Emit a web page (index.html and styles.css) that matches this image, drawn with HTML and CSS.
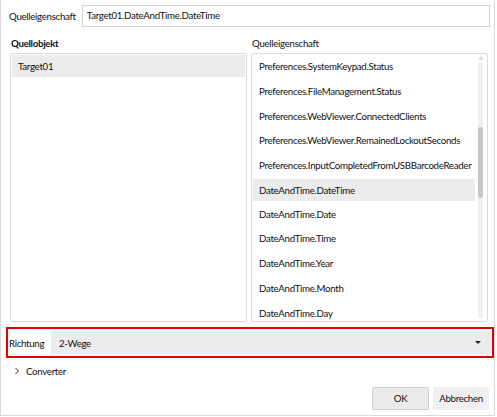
FILE: index.html
```html
<!DOCTYPE html>
<html>
<head>
<meta charset="utf-8">
<link rel="stylesheet" href="styles.css">
</head>
<body>
<div class="frame">
  <div class="toprow">
    <span class="label">Quelleigenschaft</span>
    <div class="input">Target01.DateAndTime.DateTime</div>
  </div>
  <div class="cols">
    <div class="col left">
      <div class="colhead">Quellobjekt</div>
      <div class="box">
        <div class="items">
          <div class="item sel">Target01</div>
        </div>
      </div>
    </div>
    <div class="col right">
      <div class="colhead light">Quelleigenschaft</div>
      <div class="box">
        <div class="items">
          <div class="item">Preferences.SystemKeypad.Status</div>
          <div class="item">Preferences.FileManagement.Status</div>
          <div class="item">Preferences.WebViewer.ConnectedClients</div>
          <div class="item">Preferences.WebViewer.RemainedLockoutSeconds</div>
          <div class="item">Preferences.InputCompletedFromUSBBarcodeReader</div>
          <div class="item sel">DateAndTime.DateTime</div>
          <div class="item">DateAndTime.Date</div>
          <div class="item">DateAndTime.Time</div>
          <div class="item">DateAndTime.Year</div>
          <div class="item">DateAndTime.Month</div>
          <div class="item">DateAndTime.Day</div>
        </div>
        <div class="scrollbar">
          <div class="arrow"></div>
          <div class="track"><div class="thumb"></div></div>
        </div>
      </div>
    </div>
  </div>
  <div class="dirrow">
    <span class="label">Richtung</span>
    <div class="combo">
      <span>2-Wege</span>
      <span class="caret"></span>
    </div>
  </div>
  <div class="conv">
    <svg class="chev" width="6" height="8" viewBox="0 0 6 8"><path d="M1.5 1 L4.5 4 L1.5 7" fill="none" stroke="#333" stroke-width="1"/></svg>
    <span>Converter</span>
  </div>
  <div class="buttons">
    <div class="btn ok">OK</div>
    <div class="btn cancel">Abbrechen</div>
  </div>
</div>
</body>
</html>
```

FILE: styles.css
```css
html, body {
  margin: 0;
  padding: 0;
  background: #ffffff;
}
body {
  font-family: "Lato", "Noto Sans", sans-serif;
  font-size: 9.7px;
  letter-spacing: -0.3px;
  color: #111111;
}
.frame {
  border: 1px solid #d9d9d9;
  border-top: none;
  box-sizing: border-box;
  width: 495px;
  height: 416px;
}
.toprow {
  display: flex;
  align-items: center;
  padding: 5px 4px 0 8px;
  height: 22px;
}
.toprow .label {
  width: 73px;
  white-space: nowrap;
}
.input {
  width: 409px;
  height: 22px;
  box-sizing: border-box;
  border: 1px solid #d2d2d2;
  padding: 0 4px;
  line-height: 18px;
}
.cols {
  display: flex;
  padding: 0 0 0 9px;
  gap: 4px;
  margin-top: 7px;
}
.col {
  width: 237px;
  display: flex;
  flex-direction: column;
}
.colhead {
  height: 19px;
  line-height: 18px;
  font-weight: 700;
  padding-left: 1px;
}
.colhead.light {
  font-weight: 400;
}
.box {
  height: 269px;
  box-sizing: border-box;
  border: 1px solid #dcdcdc;
  border-radius: 2px;
  display: flex;
  overflow: hidden;
}
.items {
  flex: 1;
  padding: 1px 1px 0 1px;
  min-width: 0;
}
.item {
  height: 22px;
  line-height: 22px;
  margin-bottom: 2.75px;
  padding-left: 6px;
  white-space: nowrap;
}
.right .item.sel {
  margin-top: 1px;
  margin-bottom: 1.75px;
}
.item.sel {
  background: #ececec;
}
.right .items {
  padding-right: 3px;
}
.scrollbar {
  width: 5px;
  margin: 0 4px 0 0;
  display: flex;
  flex-direction: column;
  align-items: center;
}
.arrow {
  width: 0;
  height: 0;
  border-left: 3px solid transparent;
  border-right: 3px solid transparent;
  border-bottom: 4px solid #dcdcdc;
  margin-top: 2px;
  margin-bottom: 2px;
}
.track {
  flex: 1;
  width: 5px;
  background: #f0f0f0;
  border-radius: 3px;
  margin-bottom: 3px;
  padding-top: 65px;
  box-sizing: border-box;
}
.thumb {
  width: 5px;
  height: 71px;
  background: #c6c6c6;
  border-radius: 3px;
}
.dirrow {
  margin: 5px 0 0 5px;
  width: 488px;
  height: 31px;
  box-sizing: border-box;
  border: 2px solid #e00000;
  display: flex;
  align-items: center;
  padding: 0 1px 0 1px;
}
.dirrow .label {
  width: 42px;
}
.combo {
  flex: 1;
  height: 23px;
  background: #ececec;
  display: flex;
  align-items: center;
  justify-content: space-between;
  padding: 0 10px 0 8px;
}
.caret {
  width: 0;
  height: 0;
  border-left: 3px solid transparent;
  border-right: 3px solid transparent;
  border-top: 3px solid #222;
}
.conv {
  display: flex;
  align-items: center;
  height: 16px;
  margin-top: 5px;
  padding-left: 13px;
}
.chev {
  margin-right: 6px;
}
.buttons {
  display: flex;
  justify-content: flex-end;
  gap: 4px;
  margin-top: 8px;
  padding-right: 5px;
}
.btn {
  height: 23px;
  box-sizing: border-box;
  line-height: 21px;
  text-align: center;
}
.ok {
  width: 57px;
  background: #ebebeb;
  border: 1px solid #cfcfcf;
  border-radius: 2px;
}
.cancel {
  width: 56px;
  background: #f0f0f0;
  border: 1px solid #f0f0f0;
}
```
